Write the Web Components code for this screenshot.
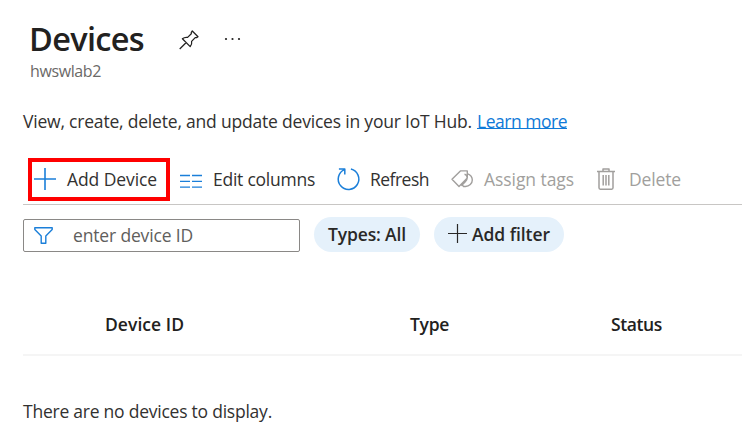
<!DOCTYPE html>
<html lang="en">
<head>
<meta charset="utf-8">
<title>Devices</title>
<style>
body { margin: 0; background: #fff; color: #323130; font-family: "Open Sans", "Noto Sans", sans-serif; font-size: 17.5px; overflow: hidden; }
</style>
</head>
<body>
<devices-page></devices-page>
<script>
const define = (name, html, setup) => {
  const template = document.createElement('template');
  template.innerHTML = html;
  customElements.define(name, class extends HTMLElement {
    constructor() {
      super();
      this.attachShadow({ mode: 'open' }).append(template.content.cloneNode(true));
    }
    connectedCallback() { if (setup) setup.call(this); }
  });
};

const icons = {
  pin: [20, 20, '<path d="M13.3 1 L19 6.8 L17.6 7.6 H16.2 L12.6 11.4 C13 13.2 12.6 15 11.2 16.6 L3.4 8.8 C4.9 7.5 6.6 7 8.6 7.4 L12.3 3.8 V2.3 Z M7 12.7 L.7 19"/>', 1.25],
  more: [18, 4, '<g fill="currentColor" stroke="none"><circle cx="2" cy="1" r="1.1"/><circle cx="8.5" cy="1" r="1.1"/><circle cx="15" cy="1" r="1.1"/></g>', 1],
  add: [22, 22, '<path d="M0 11H22M11 0V22"/>', 1.6],
  plus: [19, 19, '<path d="M0 9.5H19M9.5 0V19"/>', 1.2],
  columns: [22, 16, '<path d="M0 4.5H10M12 4.5H22M0 10.4H10M12 10.4H22M0 16.1H10M12 16.1H22"/>', 1.4],
  refresh: [22, 22, '<path d="M13.9 1.1A10.3 10.3 0 1 1 7.6 1.6M1.9 .9H7.8V6.4" />', 1.5],
  tags: [22, 20, '<path d="M1 10.3 L9.4 1.9 H16.3 V8.9 L8 17.4 Z M16.3 4.6 C19.2 5.7 21.3 8.1 21.3 11 C21.3 14.5 18.2 17.5 14.5 17.5 H12.6 L10.3 15.1 M13.5 5.2 C16.7 5.7 17 10.2 14.3 12.8 L10.3 16.8"/>', 1.4],
  trash: [18, 22, '<path d="M0 3.5H18M6 3V1H12V3M2 3.5V19.8Q2 21.2 3.3 21.2H14.7Q16 21.2 16 19.8V3.5M6.2 7V17.5M9 7V17.5M11.8 7V17.5"/>', 1.5],
  filter: [19, 17, '<path d="M.8 .8H18.2V2.5L11.8 8.9V16.2H7.2V8.9L.8 2.5Z"/>', 1.4]
};

define('ui-icon', `<style>:host{display:block;flex:none}svg{display:block;overflow:visible}</style><svg fill="none" stroke="currentColor" stroke-linejoin="round"></svg>`, function () {
  const [w, h, shape, weight] = icons[this.getAttribute('name')];
  const svg = this.shadowRoot.querySelector('svg');
  svg.setAttribute('width', w);
  svg.setAttribute('height', h);
  svg.setAttribute('viewBox', `0 0 ${w} ${h}`);
  svg.setAttribute('stroke-width', weight);
  svg.innerHTML = shape;
});

// A single-line label whose tracking adapts to the width given in its attribute.
define('ui-label', `<style>:host{display:block;flex:none;white-space:nowrap}span{display:inline-block;line-height:24px}</style><span><slot></slot></span>`, function () {
  const width = Number(this.getAttribute('width'));
  this.style.width = width + 'px';
  const span = this.shadowRoot.querySelector('span');
  const tracking = (width - span.getBoundingClientRect().width) / this.textContent.length;
  span.style.letterSpacing = tracking.toFixed(3) + 'px';
});

define('page-title', `<style>
:host{display:block;padding:18px 0 0 30px}
.row{display:flex;align-items:center;height:40px;color:#222120}
.name{font-size:32.5px;font-weight:600;margin-left:-1px}
.pin{margin-left:35px;margin-top:3px}.more{margin-left:25px;margin-top:3px}
.sub{font-size:16px;color:#6b6967;height:24px;margin-top:1px}
</style><div class="row"><div class="name"><slot></slot></div><ui-icon class="pin" name="pin"></ui-icon><ui-icon class="more" name="more"></ui-icon></div><div class="sub"><slot name="resource"></slot></div>`);

define('page-intro', `<style>:host{display:flex;padding:26px 0 0 23px}a{color:#0f7ad8;text-decoration:none;border-bottom:1px solid;height:19px;margin-left:5px}</style>
<ui-label width="449">View, create, delete, and update devices in your IoT Hub.</ui-label><a><ui-label width="90">Learn more</ui-label></a>`);

define('tool-button', `<style>
:host{display:flex;flex:none;align-items:center;height:43px;box-sizing:border-box}
:host([highlighted]){border:4px solid #f00}
:host([disabled]){color:#a19f9d}
::slotted(ui-icon){color:#1b7fd9;margin-top:-1px}
:host([disabled]) ::slotted(ui-icon){color:#a19f9d}
::slotted(ui-label){margin-top:-2px}
</style><slot></slot>`);

define('command-bar', `<style>
:host{display:flex;height:46px;margin:25px 0 0 23px;border-bottom:1px solid #c8c6c4}
tool-button{gap:11px}
.add{width:142px;margin-left:5px;padding-left:2px;box-sizing:border-box}
.columns{margin-left:10px}.refresh{margin-left:22px}.tags{margin-left:22px}.trash{margin-left:23px;gap:14px}
</style>
<tool-button class="add" highlighted><ui-icon name="add"></ui-icon><ui-label width="90">Add Device</ui-label></tool-button>
<tool-button class="columns"><ui-icon name="columns"></ui-icon><ui-label width="102">Edit columns</ui-label></tool-button>
<tool-button class="refresh"><ui-icon name="refresh"></ui-icon><ui-label width="59">Refresh</ui-label></tool-button>
<tool-button class="tags" disabled><ui-icon name="tags"></ui-icon><ui-label width="90">Assign tags</ui-label></tool-button>
<tool-button class="trash" disabled><ui-icon name="trash"></ui-icon><ui-label width="52">Delete</ui-label></tool-button>`);

define('search-field', `<style>:host{display:flex;align-items:center;box-sizing:border-box;width:277px;height:33px;border:1px solid #8a8886;border-radius:2px;padding-left:10px;gap:20px;color:#605e5c}ui-icon{color:#1b7fd9}::slotted(ui-label){margin-top:-2px}</style><ui-icon name="filter"></ui-icon><slot></slot>`);

define('filter-chip', `<style>:host{display:flex;align-items:center;box-sizing:border-box;height:35px;border-radius:18px;background:#e5f1fb;padding:0 14px;gap:5px;font-weight:600;color:#292827}::slotted(*){margin-top:-2px}</style><slot></slot>`);

define('filter-row', `<style>:host{display:flex;gap:14px;margin:12px 0 0 23px}search-field{margin-top:2px}</style>
<search-field><ui-label width="120">enter device ID</ui-label></search-field>
<filter-chip><ui-label width="78">Types: All</ui-label></filter-chip>
<filter-chip><ui-icon name="plus"></ui-icon><ui-label width="78">Add filter</ui-label></filter-chip>`);

define('device-table', `<style>
:host{display:block;margin:60px 0 0 23px}
.head{display:grid;grid-template-columns:305px 201px 1fr;padding-left:82px;height:42px;border-bottom:2px solid #f5f5f5;font-weight:600;color:#222120}
.empty{padding-top:43px}
</style><div class="head"><ui-label width="79">Device ID</ui-label><ui-label width="39">Type</ui-label><ui-label width="51">Status</ui-label></div>
<div class="empty"><ui-label width="249">There are no devices to display.</ui-label></div>`);

define('devices-page', `<style>:host{display:block;width:742px;height:439px;overflow:hidden}</style>
<page-title><ui-label width="115">Devices</ui-label><ui-label slot="resource" width="71">hwswlab2</ui-label></page-title>
<page-intro></page-intro><command-bar></command-bar><filter-row></filter-row><device-table></device-table>`);
</script>
</body>
</html>
